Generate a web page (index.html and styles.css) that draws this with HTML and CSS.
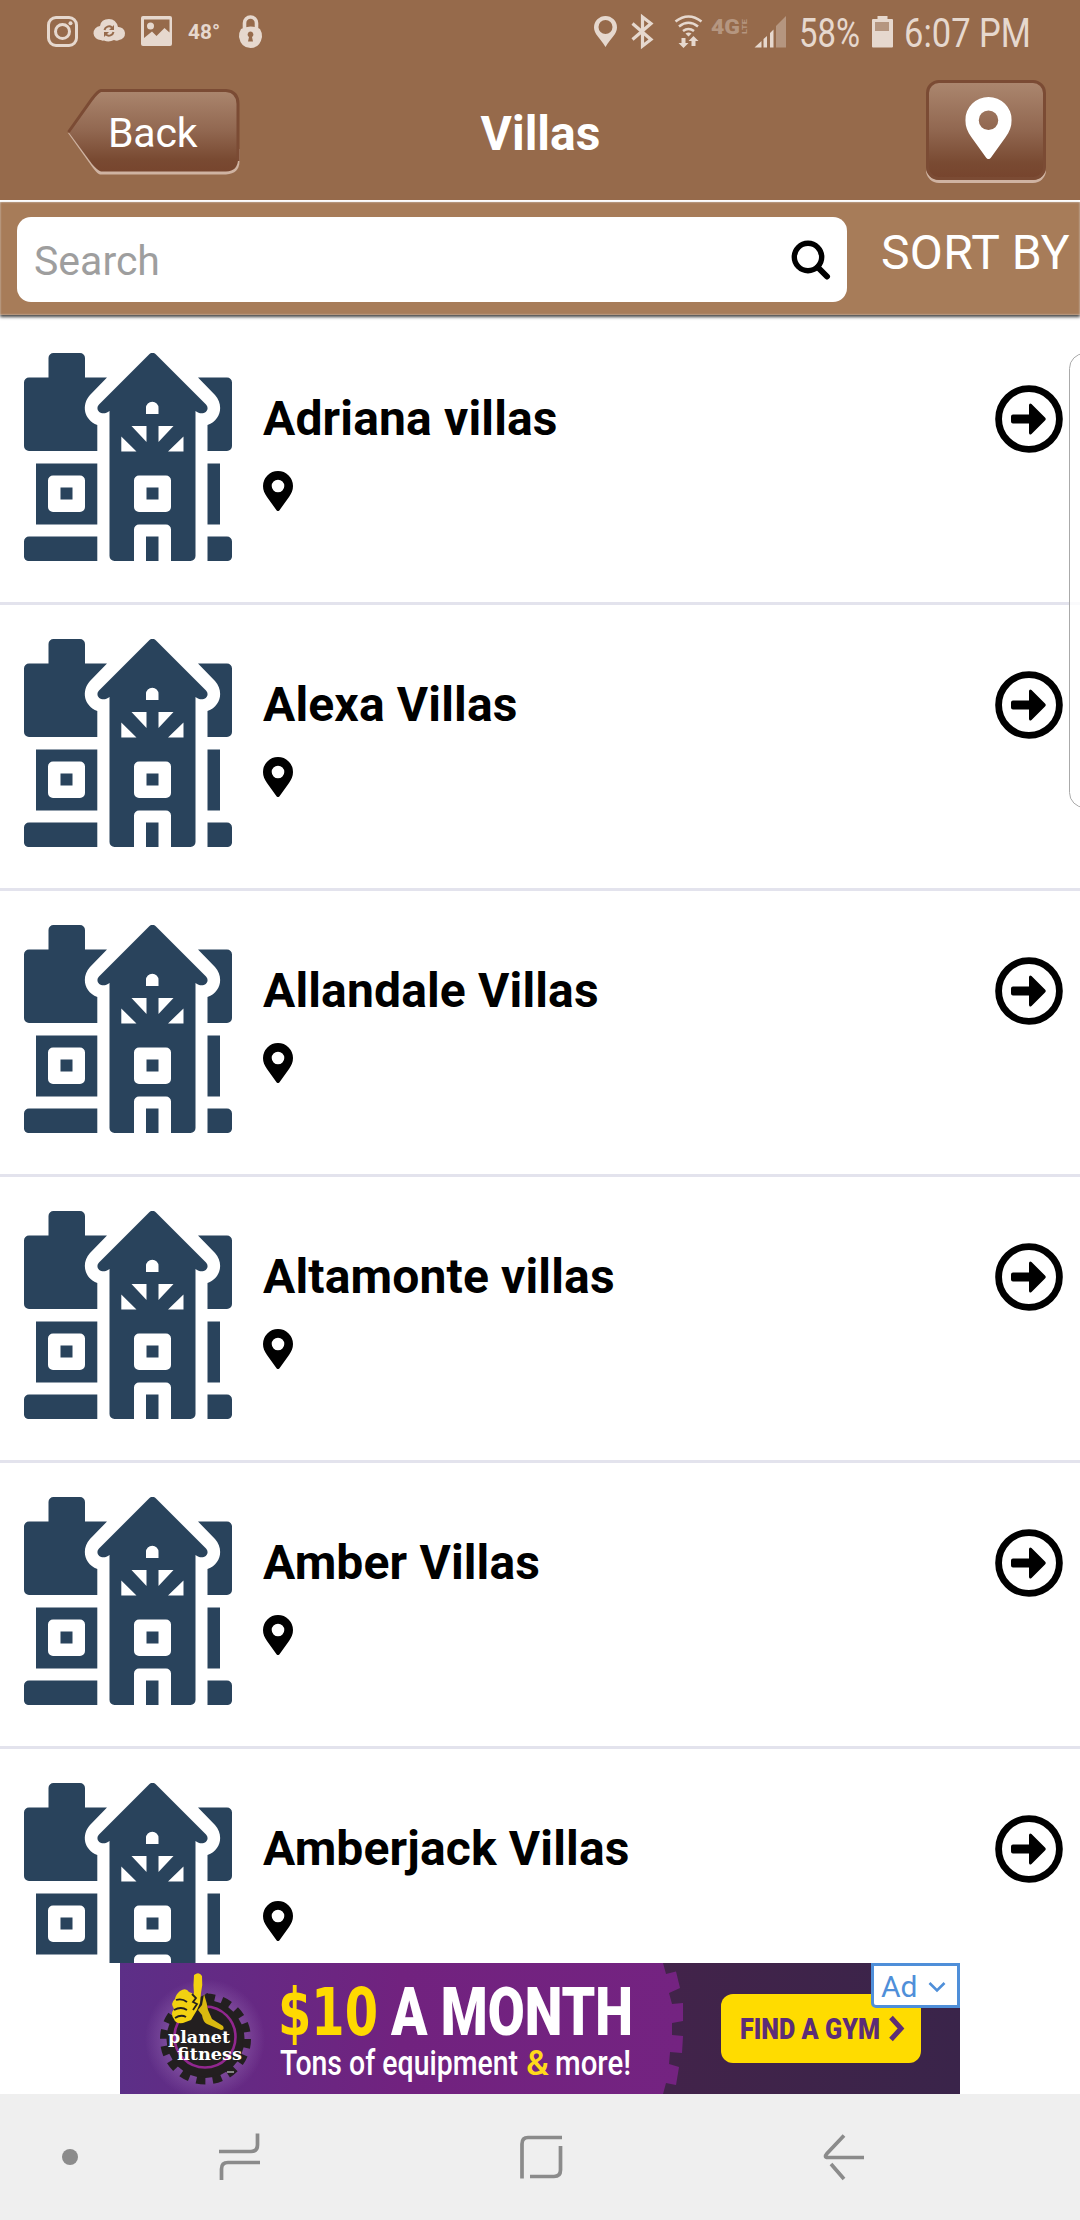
FILE: index.html
```
<!DOCTYPE html>
<html lang="en">
<head>
  <meta charset="UTF-8">
  <meta name="viewport" content="width=device-width, initial-scale=1.0">
  <title>Villas</title>
  <link rel="stylesheet" href="styles.css">
</head>
<body>
  <!-- shared icons -->
  <svg class="defs" width="0" height="0">
    <symbol id="house" viewBox="0 0 208 208">
      <path d="M5 24.500H24.500V5a5 5 0 0 1 5-5H56a5 5 0 0 1 5 5V24.500H83L66 42C57 52 60 67 73.300 72V98H5a5 5 0 0 1-5-5V29.500a5 5 0 0 1 5-5z"/>
      <path d="M174 24.500H203a5 5 0 0 1 5 5V93a5 5 0 0 1-5 5H183.500V72C197 67 200 52 191 42z"/>
      <path fill-rule="evenodd" d="M12 110.500H73.300V171.500H12zM29 122.500a5 5 0 0 0-5 5V154a5 5 0 0 0 5 5H56a5 5 0 0 0 5-5V127.500a5 5 0 0 0-5-5zM36.500 134.500h12v12h-12z"/>
      <path d="M183.500 110.500H196V171.500H183.500z"/>
      <path d="M5 183.500H73.300V208H4a5 5 0 0 1-4-4V188.500a5 5 0 0 1 5-5z"/>
      <path d="M183.500 183.500H203a5 5 0 0 1 5 5V204a5 5 0 0 1-4 4H183.500z"/>
      <path fill-rule="evenodd" d="M125 1.500Q128.500-2 132 1.500L182 51.500C187 57 179 64 171.500 58V203a5 5 0 0 1-5 5H147V176.500a5 5 0 0 0-5-5H115a5 5 0 0 0-5 5V208H90.500a5 5 0 0 1-5-5V58C78 64 70 57 75 51.500zM122 61V55a6.200 6.200 0 0 1 12.500 0V61zM107.500 73H122.500V89zM134.500 73H149.500L134.500 89zM97.300 83.500V98.500H112.500zM159.500 83.500V98.500H144zM115 122.500a5 5 0 0 0-5 5V154a5 5 0 0 0 5 5H142a5 5 0 0 0 5-5V127.500a5 5 0 0 0-5-5zM122.500 134.500h12v12h-12z"/>
      <path d="M122 183.500H134.500V208H122z"/>
    </symbol>
    <symbol id="pin" viewBox="0 0 30 40">
      <path fill-rule="evenodd" d="M15 0A15 15 0 0 0 0 15C0 19 1.500 22.500 4 26L13.500 39.200Q15 41 16.500 39.200L26 26C28.500 22.500 30 19 30 15A15 15 0 0 0 15 0zM15 8.700a6.300 6.300 0 1 1 0 12.600 6.300 6.300 0 1 1 0-12.600z"/>
    </symbol>
    <symbol id="arrow" viewBox="0 0 68 68">
      <circle cx="34" cy="34" r="30.400" fill="none" stroke="#000" stroke-width="6.800"/>
      <path d="M18 29.500H34V20Q34.500 17.500 36.500 19L50 32.500Q51.500 34 50 35.500L36.500 49Q34.500 50.500 34 48V38.500H18Q16 38.500 16 36.500V31.500Q16 29.500 18 29.500z"/>
    </symbol>
  </svg>

  <header>
    <div class="status-bar">
      <svg class="status-icons" width="270" height="64" viewBox="0 0 270 64">
        <rect x="48.500" y="17.500" width="28" height="28" rx="7.500" fill="none" stroke="#e6d8ce" stroke-width="3"/>
        <circle cx="62.500" cy="31.500" r="7" fill="none" stroke="#e6d8ce" stroke-width="3"/>
        <circle cx="70.500" cy="23.300" r="2"/>
        <path d="M101 40a7 7 0 0 1-1-14Q101 19 109 19Q116 19 118 27A6.500 6.500 0 0 1 119 40Q117 41.500 114 40Q109 42.500 104 40.500Q102 41 101 40z"/>
        <path d="M104.500 30a4.600 4.600 0 0 1 7.500-2.500M113.500 32a4.600 4.600 0 0 1-7.500 2.500" fill="none" stroke="#966a4b" stroke-width="2"/>
        <path d="M114 25v5h-5zM104 37v-5h5z" fill="#966a4b"/>
        <path fill-rule="evenodd" d="M143 16h27q2 0 2 2v26q0 2-2 2h-27q-2 0-2-2v-26q0-2 2-2zM144 19.500V38l8-6.500 4.500 4.500 8-8 5 4.500V19.500z"/>
        <circle cx="150.500" cy="26" r="3.500"/>
        <text x="188" y="39" class="temp" textLength="32" lengthAdjust="spacingAndGlyphs">48°</text>
        <path d="M244.500 31V23a6 6 0 0 1 12 0V31" fill="none" stroke="#e6d8ce" stroke-width="3.600"/>
        <path fill-rule="evenodd" d="M241 29Q250.500 24 260 29Q262 32 262 37Q260 48 250.500 48Q241 48 239 37Q239 32 241 29zM250.500 31.500a3 3 0 0 0-1.500 5.500L248 41.500H253L252 37a3 3 0 0 0-1.500-5.500z"/>
      </svg>
      <svg class="status-icons" width="500" height="64" viewBox="580 0 500 64">
        <path fill-rule="evenodd" d="M605.500 16A11.500 11.500 0 0 0 594 27.500C594 34 600 38 605.500 47C611 38 617 34 617 27.500A11.500 11.500 0 0 0 605.500 16zM605.500 20a7 7 0 1 1 0 14 7 7 0 1 1 0-14z"/>
        <path d="M632.500 23.500L651 39.500L642.500 46V17L651 23.500L632.500 39.500" fill="none" stroke="#e6d8ce" stroke-width="3.200"/>
        <g fill="none" stroke="#e6d8ce" stroke-width="2.600">
          <path d="M675.500 21.500Q688.500 11.500 701.500 21.500M679 26.500Q688.500 19 698 26.500M683 31Q688.500 27 694 31"/>
        </g>
        <path d="M688.500 36.500l-3-3q3-2 6 0zM681.500 38h4v5h3l-5 5-5-5h3zM691.500 46h4v-5h3l-5-5-5 5h3z"/>
        <g fill="#b59680">
          <text x="711" y="34" class="net" textLength="29" lengthAdjust="spacingAndGlyphs">4G</text>
          <text x="0" y="0" class="lte" transform="translate(747 34) rotate(-90)" textLength="15" lengthAdjust="spacingAndGlyphs">LTE</text>
          <path d="M776 26L786 16V47.500H776z"/>
        </g>
        <path d="M754.500 47.500L761.500 41V47.500zM763.500 39L767 36V47.500H763.500zM770 33L773.500 29.500V47.500H770z"/>
        <text x="799" y="47" class="clock" textLength="61" lengthAdjust="spacingAndGlyphs">58%</text>
        <path d="M872 20q0-1 1-1h4.500v-3h10v3h4.500q1 0 1 1v26.500q0 1-1 1h-19q-1 0-1-1z"/>
        <path d="M875 22h14v9h-14z" fill="#b59680"/>
        <text x="904" y="47" class="clock" textLength="127" lengthAdjust="spacingAndGlyphs">6:07 PM</text>
      </svg>
    </div>
    <div class="nav">
      <button class="back">
        <svg width="174" height="86" viewBox="0 0 174 86">
          <defs>
            <linearGradient id="brown" x1="0" y1="0" x2="0" y2="1">
              <stop offset="0" stop-color="#ab866e"/>
              <stop offset="0.500" stop-color="#916750"/>
              <stop offset="0.850" stop-color="#794a32"/>
              <stop offset="1" stop-color="#77452e"/>
            </linearGradient>
          </defs>
          <path d="M1 44L26 79Q31 85.500 33 85.500H159Q172.500 84.500 172.500 72V60" fill="#cfb3a2"/>
          <path d="M1.500 43L25 10Q31 2 34 1.500H159Q171 2.500 171 15V70Q171 82 159 82.500H34Q31 82 25 75z" fill="url(#brown)"/>
          <path d="M1.500 43L25 10Q31 2 34 1.500H159Q171 2.500 171 15V72" fill="none" stroke="#7b4b34" stroke-width="3"/>
        </svg>
        <span>Back</span>
      </button>
      <h1>Villas</h1>
      <button class="map"><svg width="47" height="62" viewBox="0 0 30 40"><use href="#pin"/></svg></button>
    </div>
  </header>

  <div class="search-bar">
    <div class="search">
      <span>Search</span>
      <svg width="40" height="40" viewBox="0 0 40 40" fill="none" stroke="#000">
        <circle cx="17" cy="17" r="13.700" stroke-width="5.400"/>
        <path d="M27 27.500L36 36.500" stroke-width="6" stroke-linecap="round"/>
      </svg>
    </div>
    <div class="sort">SORT BY</div>
  </div>

  <main class="list">
    <div class="row">
      <svg class="thumb"><use href="#house"/></svg>
      <div class="info"><h2>Adriana villas</h2><svg class="pin"><use href="#pin"/></svg></div>
      <svg class="go"><use href="#arrow"/></svg>
    </div>
    <div class="row">
      <svg class="thumb"><use href="#house"/></svg>
      <div class="info"><h2>Alexa Villas</h2><svg class="pin"><use href="#pin"/></svg></div>
      <svg class="go"><use href="#arrow"/></svg>
    </div>
    <div class="row">
      <svg class="thumb"><use href="#house"/></svg>
      <div class="info"><h2>Allandale Villas</h2><svg class="pin"><use href="#pin"/></svg></div>
      <svg class="go"><use href="#arrow"/></svg>
    </div>
    <div class="row">
      <svg class="thumb"><use href="#house"/></svg>
      <div class="info"><h2>Altamonte villas</h2><svg class="pin"><use href="#pin"/></svg></div>
      <svg class="go"><use href="#arrow"/></svg>
    </div>
    <div class="row">
      <svg class="thumb"><use href="#house"/></svg>
      <div class="info"><h2>Amber Villas</h2><svg class="pin"><use href="#pin"/></svg></div>
      <svg class="go"><use href="#arrow"/></svg>
    </div>
    <div class="row">
      <svg class="thumb"><use href="#house"/></svg>
      <div class="info"><h2>Amberjack Villas</h2><svg class="pin"><use href="#pin"/></svg></div>
      <svg class="go"><use href="#arrow"/></svg>
    </div>
    <div class="edge-handle"></div>
  </main>

  <div class="ad">
    <svg width="840" height="131" viewBox="0 0 840 131">
      <defs>
        <linearGradient id="purple"><stop offset="0" stop-color="#5c2f87"/><stop offset="0.500" stop-color="#71227f"/><stop offset="1" stop-color="#742381"/></linearGradient>
        <linearGradient id="dark"><stop offset="0" stop-color="#43234a"/><stop offset="1" stop-color="#3a244a"/></linearGradient>
        <radialGradient id="glow"><stop offset="0.600" stop-color="#9a6db5"/><stop offset="1" stop-color="#9a6db5" stop-opacity="0"/></radialGradient>
      </defs>
      <rect x="500" width="340" height="131" fill="url(#dark)"/>
      <path d="M0 0H543L546 11L556 8.500L560 25L549 30L552 41L563 40V58L552 60V72L563 73L562 90L550 89L549 101L559 104L556 122L546 120L543 131H0z" fill="url(#purple)"/>
      <!-- logo -->
      <circle cx="85" cy="76" r="60" fill="url(#glow)" opacity="0.500"/>
      <circle cx="85.500" cy="76" r="39" fill="#231f20"/>
      <circle cx="85.500" cy="76" r="41.500" fill="none" stroke="#231f20" stroke-width="8" stroke-dasharray="9 7.300"/>
      <circle cx="85" cy="74" r="30.500" fill="none" stroke="#92278f" stroke-width="2.600"/>
      <path d="M65 60Q68 42 76 36L88 30Q86 42 88 46L102 66Q85 72 66 68z" fill="#231f20"/>
      <path d="M74 31Q73 22 74 12Q79 8 82 13Q83 22 81 30L80 40L77 47L71 57L63 60Q55 61 54 56Q50 51 54 46Q50 40 55 36Q56 31 60 28Q66 24 69 29z" fill="#f2d111"/>
      <path d="M84 31Q87 40 88 47L92 56L103 63Q105 67 101 67L87 61Q83 59 82 52L78 47L82 42z" fill="#d9b90f"/>
      <path d="M56 37Q62 35 67 39M54 47Q61 43 67 47M55 55Q61 51 66 54M72 31L76 35L73 39L77 41L73 47" fill="none" stroke="#231f20" stroke-width="1.800"/>
      <text x="48" y="80" class="brand" textLength="62" lengthAdjust="spacingAndGlyphs">planet</text>
      <text x="57" y="97" class="brand" textLength="65" lengthAdjust="spacingAndGlyphs">fitness</text>
      <path d="M107 109H114" stroke="#aaa" stroke-width="1.500"/>

      <text x="158" y="72" class="price" textLength="100" lengthAdjust="spacingAndGlyphs">$10</text>
      <text x="271" y="72" class="month" textLength="242" lengthAdjust="spacingAndGlyphs">A MONTH</text>
      <text x="160" y="111.500" class="tag" textLength="238" lengthAdjust="spacingAndGlyphs">Tons of equipment</text>
      <text x="406" y="111.500" class="tag amp" textLength="23" lengthAdjust="spacingAndGlyphs">&amp;</text>
      <text x="435" y="111.500" class="tag" textLength="76" lengthAdjust="spacingAndGlyphs">more!</text>
      <rect x="601" y="31" width="200" height="69" rx="12" fill="#ffdc00"/>
      <text x="620" y="76" class="cta" textLength="140" lengthAdjust="spacingAndGlyphs">FIND A GYM</text>
      <path d="M771 54.500L781 65.500L771 76.500" fill="none" stroke="#5c2d77" stroke-width="5"/>
    </svg>
    <div class="ad-badge">
      Ad
      <svg width="18" height="12" viewBox="0 0 18 12"><path d="M1.500 2L9 9.500L16.500 2" fill="none" stroke="#4f8fd9" stroke-width="2.600"/></svg>
    </div>
  </div>

  <footer>
    <svg width="1080" height="126" viewBox="0 0 1080 126" fill="none" stroke="#8b8b8b" stroke-width="3.700">
      <circle cx="70" cy="63" r="8" fill="#8b8b8b" stroke="none"/>
      <path d="M219 57.500H251Q257.500 57.500 257.500 51V39.500M260 68.500H228Q221.500 68.500 221.500 75V86"/>
      <path d="M522 84.500V50Q522 43.500 528 43.500H562M560.500 52V76Q560.500 82.500 554 82.500H530"/>
      <path d="M844 41.500L827 59.500Q823.500 63.500 828 63.500H864M831 70L844 85"/>
    </svg>
  </footer>
</body>
</html>
```
FILE: styles.css
```
:root {
  --brown: #966a4b;
  --brown-light: #a77c59;
  --status: #e6d8ce;
  --line: #e3e3ed;
  --navy: #29435c;
}

* {
  box-sizing: border-box;
}

body {
  font-family: Roboto, "Liberation Sans", sans-serif;
  margin: 0;
  height: 2220px;
  display: flex;
  flex-direction: column;
  background: #fff;
  color: #000;
  overflow: hidden;
}

svg {
  display: block;
  flex: none;
}

.defs {
  position: absolute;
}

header {
  height: 202px;
  flex: none;
  background: var(--brown);
  border-bottom: 2px solid #fff;
}

.status-bar {
  height: 64px;
  display: flex;
  justify-content: space-between;
}

.status-icons {
  fill: var(--status);
}

.temp {
  font-size: 21px;
  font-weight: bold;
}

.net {
  font-size: 21px;
  font-weight: 900;
}

.lte {
  font-size: 8px;
  font-weight: bold;
}

.clock {
  font-size: 40px;
}

.nav {
  height: 136px;
  padding: 0 34px 0 67px;
  display: grid;
  grid-template-columns: 174px 1fr 120px;
  align-items: start;
}

.nav h1 {
  margin: 42px 0 0;
  padding-right: 86px;
  font-size: 48px;
  line-height: 56px;
  color: #fff;
  text-align: center;
}

button {
  border: none;
  padding: 0;
  background: none;
  color: #fff;
  font-family: inherit;
}

.back {
  display: grid;
  margin-top: 25px;
  font-size: 41px;
  line-height: 50px;
  letter-spacing: -0.2px;
}

.back svg,
.back span {
  grid-area: 1 / 1;
}

.back span {
  padding: 19px 0 0 41px;
  text-align: left;
}

.map {
  display: flex;
  justify-content: center;
  align-items: flex-start;
  height: 100px;
  margin-top: 16px;
  padding: 14px 0 0 4px;
  border: 3px solid #7b4b34;
  border-radius: 13px;
  background: linear-gradient(#ab866e, #916750 50%, #794a32 85%, #77452e);
  box-shadow: 0 3px 0 #cfb3a2;
}

.map svg {
  fill: #fff;
}

.search-bar {
  position: relative;
  z-index: 1;
  height: 113px;
  flex: none;
  padding: 15px 10px 0 17px;
  display: flex;
  justify-content: space-between;
  background: var(--brown-light);
  box-shadow: 0 2px 3px rgba(0, 0, 0, 0.75), inset 0 0 2px #ddd;
}

.search {
  width: 830px;
  height: 85px;
  padding: 0 16px 0 17px;
  border-radius: 14px;
  background: #fff;
  display: flex;
  justify-content: space-between;
  align-items: center;
  font-size: 41px;
  color: #9e9e9e;
}

.search span {
  padding-top: 2px;
}

.sort {
  padding-top: 8px;
  font-size: 48px;
  line-height: 56px;
  letter-spacing: 0.4px;
  color: #fff;
  white-space: nowrap;
}

.list {
  position: relative;
  flex: 1;
  min-height: 0;
  padding-top: 4px;
  overflow: hidden;
}

.row {
  height: 286px;
  padding: 34px 17px 0 24px;
  border-bottom: 3px solid var(--line);
  display: flex;
  align-items: flex-start;
}

.thumb {
  width: 208px;
  height: 208px;
  fill: var(--navy);
}

.info {
  flex: 1;
  padding-left: 31px;
}

.info h2 {
  margin: 38px 0 24px;
  font-size: 48px;
  line-height: 56px;
  letter-spacing: 0.15px;
}

.pin {
  width: 30px;
  height: 40px;
}

.go {
  width: 68px;
  height: 68px;
  margin-top: 32px;
}

/* edge panel handle, floats over the list */
.edge-handle {
  position: absolute;
  top: 38px;
  right: -20px;
  width: 31px;
  height: 455px;
  border: 1px solid #aaa;
  border-radius: 16px;
  background: rgba(255, 255, 255, 0.8);
}

.ad {
  position: relative;
  width: 840px;
  height: 131px;
  flex: none;
  margin: 0 auto;
}

.brand {
  font-family: "DejaVu Serif", serif;
  font-size: 17px;
  font-weight: bold;
  fill: #fff;
}

.price {
  font-family: "DejaVu Sans", sans-serif;
  font-size: 65px;
  font-weight: bold;
  fill: #ffd900;
}

.month {
  font-size: 67px;
  font-weight: 900;
  fill: #fff;
}

.tag {
  font-size: 35px;
  font-weight: 500;
  fill: #fff;
}

.amp {
  fill: #ffd91a;
}

.cta {
  font-size: 29px;
  font-weight: 900;
  fill: #5c2d77;
}

.ad-badge {
  position: absolute;
  top: 0;
  right: 0;
  width: 89px;
  height: 45px;
  padding: 2px 11px 0 7px;
  border: 3px solid #4f8fd9;
  border-bottom-left-radius: 5px;
  background: #fff;
  color: #4f8fd9;
  font-size: 30px;
  display: flex;
  align-items: center;
  justify-content: space-between;
}

footer {
  height: 126px;
  flex: none;
  background: #efefef;
}
```
